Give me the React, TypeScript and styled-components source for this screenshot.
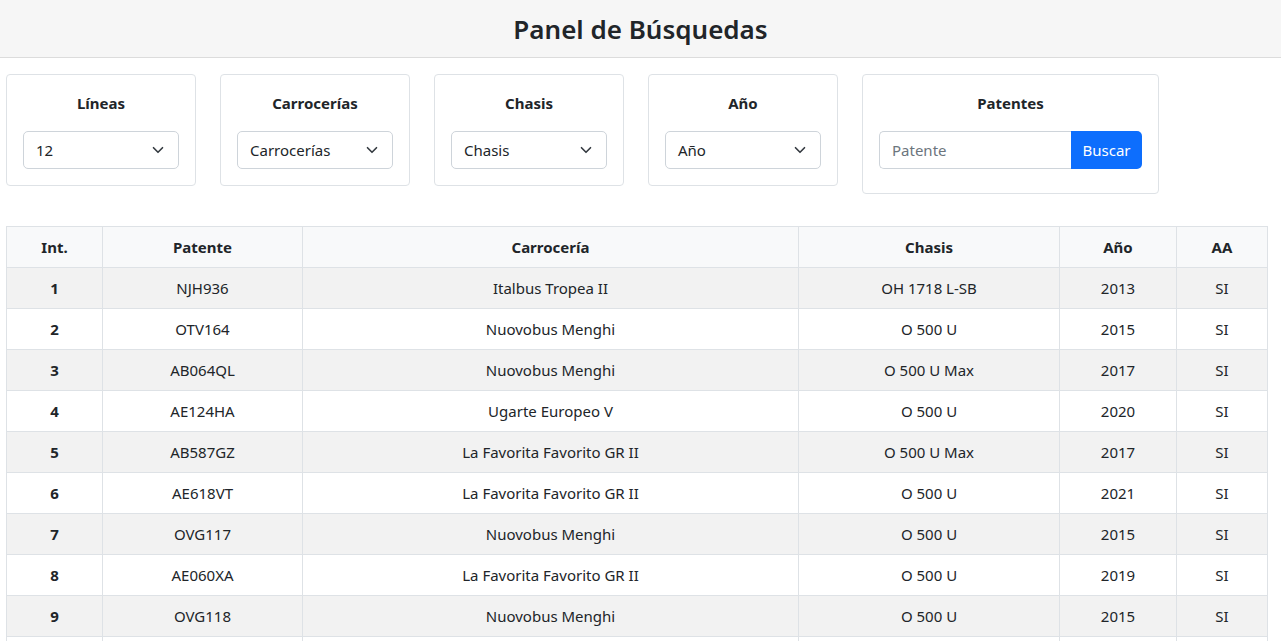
import React from "react";
import styled, { createGlobalStyle } from "styled-components";

const rows = [
    { id: 1, patente: "NJH936", carroceria: "Italbus Tropea II", chasis: "OH 1718 L-SB", anio: 2013, aa: "SI" },
    { id: 2, patente: "OTV164", carroceria: "Nuovobus Menghi", chasis: "O 500 U", anio: 2015, aa: "SI" },
    { id: 3, patente: "AB064QL", carroceria: "Nuovobus Menghi", chasis: "O 500 U Max", anio: 2017, aa: "SI" },
    { id: 4, patente: "AE124HA", carroceria: "Ugarte Europeo V", chasis: "O 500 U", anio: 2020, aa: "SI" },
    { id: 5, patente: "AB587GZ", carroceria: "La Favorita Favorito GR II", chasis: "O 500 U Max", anio: 2017, aa: "SI" },
    { id: 6, patente: "AE618VT", carroceria: "La Favorita Favorito GR II", chasis: "O 500 U", anio: 2021, aa: "SI" },
    { id: 7, patente: "OVG117", carroceria: "Nuovobus Menghi", chasis: "O 500 U", anio: 2015, aa: "SI" },
    { id: 8, patente: "AE060XA", carroceria: "La Favorita Favorito GR II", chasis: "O 500 U", anio: 2019, aa: "SI" },
    { id: 9, patente: "OVG118", carroceria: "Nuovobus Menghi", chasis: "O 500 U", anio: 2015, aa: "SI" },
    { id: 10, patente: "OVG119", carroceria: "Nuovobus Menghi", chasis: "O 500 U", anio: 2015, aa: "SI" },
];

const filters = [
    { title: "Líneas", value: "12" },
    { title: "Carrocerías", value: "Carrocerías" },
    { title: "Chasis", value: "Chasis" },
    { title: "Año", value: "Año" },
];

const columns = [
    { label: "Int.", width: 96 },
    { label: "Patente", width: 200 },
    { label: "Carrocería", width: 496 },
    { label: "Chasis", width: 261 },
    { label: "Año", width: 117 },
    { label: "AA", width: 91 },
];

export default function App() {
    return (
        <>
            <GlobalStyle />
            <Header>
                <Title>Panel de Búsquedas</Title>
            </Header>
            <Main>
                <Filters>
                    {filters.map(f => (
                        <Card key={f.title} width={190}>
                            <CardTitle>{f.title}</CardTitle>
                            <Select>
                                <span>{f.value}</span>
                                <Chevron />
                            </Select>
                        </Card>
                    ))}
                    <Card width={297} $padBottom={24}>
                        <CardTitle>Patentes</CardTitle>
                        <InputGroup>
                            <Input placeholder="Patente" />
                            <Button>Buscar</Button>
                        </InputGroup>
                    </Card>
                </Filters>
                <Table>
                    <colgroup>
                        {columns.map(c => <col key={c.label} style={{ width: c.width }} />)}
                    </colgroup>
                    <thead>
                        <tr>
                            {columns.map(c => <Th key={c.label}>{c.label}</Th>)}
                        </tr>
                    </thead>
                    <tbody>
                        {rows.map(r => (
                            <Row key={r.id}>
                                <Th as="td">{r.id}</Th>
                                <Td>{r.patente}</Td>
                                <Td>{r.carroceria}</Td>
                                <Td>{r.chasis}</Td>
                                <Td>{r.anio}</Td>
                                <Td>{r.aa}</Td>
                            </Row>
                        ))}
                    </tbody>
                </Table>
            </Main>
        </>
    );
}

function Chevron() {
    return (
        <svg width="12" height="12" viewBox="0 0 16 16" fill="none">
            <path d="M2 5l6 6 6-6" stroke="#343a40" strokeWidth="2.2" strokeLinecap="round" strokeLinejoin="round" />
        </svg>
    );
}

const GlobalStyle = createGlobalStyle`
    body {
        margin: 0;
        font-family: "Noto Sans", "Open Sans", sans-serif;
        font-size: 16px;
        color: #212529;
        background: #fff;
        overflow: hidden;
    }
    * { box-sizing: border-box; }
`;

const Header = styled.header`
    height: 58px;
    background: #f6f6f6;
    border-bottom: 1px solid #dcdcdc;
    display: flex;
    align-items: center;
    justify-content: center;
`;

const Title = styled.h1`
    margin: 0;
    font-size: 26px;
    font-weight: 600;
    line-height: 1;
`;

const Main = styled.main`
    padding: 16px 14px 0 6px;
`;

const Filters = styled.div`
    display: flex;
    gap: 24px;
    align-items: flex-start;
`;

const Card = styled.div<{ width: number; $padBottom?: number }>`
    width: ${({ width }) => width}px;
    border: 1px solid #dee2e6;
    border-radius: 4px;
    padding: 16px 16px ${({ $padBottom }) => $padBottom ?? 16}px;
    display: flex;
    flex-direction: column;
    align-items: center;
    gap: 16px;
`;

const CardTitle = styled.div`
    font-weight: 700;
    font-size: 15px;
    line-height: 24px;
`;

const Select = styled.div`
    width: 100%;
    height: 38px;
    border: 1px solid #ced4da;
    border-radius: 5px;
    padding: 0 14px 0 12px;
    display: flex;
    align-items: center;
    justify-content: space-between;
    font-size: 15px;
`;

const InputGroup = styled.div`
    display: flex;
    width: 100%;
    height: 38px;
`;

const Input = styled.input`
    flex: 1;
    min-width: 0;
    border: 1px solid #ced4da;
    border-right: none;
    border-radius: 5px 0 0 5px;
    padding: 0 12px;
    font: inherit;
    font-size: 15px;
    &::placeholder { color: #6c757d; }
`;

const Button = styled.button`
    width: 71px;
    border: none;
    border-radius: 0 5px 5px 0;
    background: #0d6efd;
    color: #fff;
    font: inherit;
    font-size: 15px;
`;

const Table = styled.table`
    margin-top: 32px;
    width: 1261px;
    table-layout: fixed;
    border-collapse: collapse;
    font-size: 15px;
`;

const Th = styled.th`
    height: 41px;
    padding: 0 8px;
    border: 1px solid #dee2e6;
    background: transparent;
    font-weight: 700;
    text-align: center;
    thead & { background: #f8f9fa; }
`;

const Td = styled.td`
    height: 41px;
    padding: 0 8px;
    border: 1px solid #dee2e6;
    text-align: center;
`;

const Row = styled.tr`
    &:nth-child(odd) { background: #f2f2f2; }
`;
